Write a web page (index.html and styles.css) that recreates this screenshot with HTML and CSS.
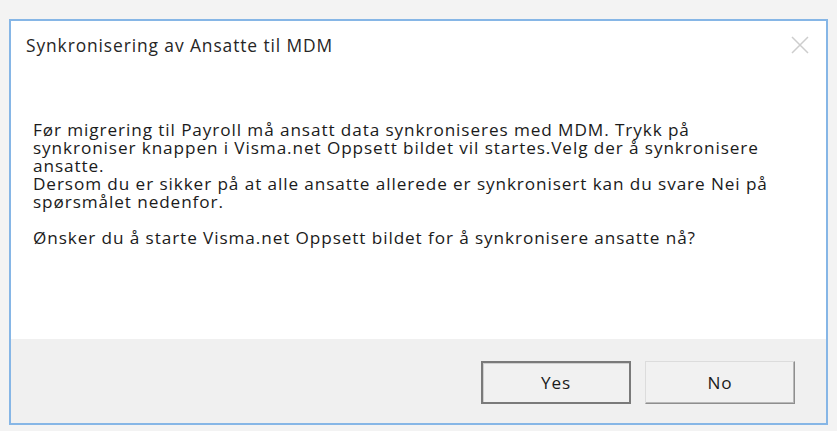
FILE: index.html
```html
<!DOCTYPE html>
<html lang="no">
<head>
<meta charset="utf-8">
<title>Synkronisering av Ansatte til MDM</title>
<link rel="stylesheet" href="styles.css">
</head>
<body>
<div class="dialog">
  <div class="titlebar">
    <span class="title">Synkronisering av Ansatte til MDM</span>
    <span class="close" aria-label="Lukk">
      <svg width="20" height="20" viewBox="0 0 20 20"><path d="M2 2 L18 18 M18 2 L2 18" stroke="#cdcdcd" stroke-width="1.5" fill="none"/></svg>
    </span>
  </div>
  <div class="content">
    <p class="msg">Før migrering til Payroll må ansatt data synkroniseres med MDM. Trykk på synkroniser knappen i Visma.net Oppsett bildet vil startes.Velg der å synkronisere ansatte.
Dersom du er sikker på at alle ansatte allerede er synkronisert kan du svare Nei på spørsmålet nedenfor.

Ønsker du å starte Visma.net Oppsett bildet for å synkronisere ansatte nå?</p>
  </div>
  <div class="footer">
    <button class="btn btn-default">Yes</button>
    <button class="btn">No</button>
  </div>
</div>
</body>
</html>
```
FILE: styles.css
```css
html, body {
  margin: 0;
  padding: 0;
}
body {
  background: #f3f3f3;
  width: 837px;
  height: 431px;
  overflow: hidden;
  font-family: "Open Sans", "Noto Sans", sans-serif;
  color: #1b1b1b;
}
.dialog {
  margin: 19px 0 0 9px;
  width: 815px;
  height: 402px;
  border: 2px solid #86b6e6;
  background: #ffffff;
  display: flex;
  flex-direction: column;
}
.titlebar {
  height: 47px;
  display: flex;
  align-items: center;
  justify-content: space-between;
  padding: 0 16px 0 15px;
}
.title {
  font-size: 17.4px;
  letter-spacing: 0.9px;
  color: #262626;
}
.close {
  display: flex;
}
.content {
  flex: 1;
  padding: 53px 40px 0 22px;
}
.msg {
  margin: 0;
  font-size: 17.2px;
  letter-spacing: 0.9px;
  line-height: 18px;
  width: 765px;
  white-space: pre-line;
}
.footer {
  height: 84px;
  background: #f0f0f0;
  display: flex;
  justify-content: flex-end;
  align-items: flex-start;
  padding: 22px 31px 0 0;
  box-sizing: border-box;
  gap: 14px;
}
.btn {
  width: 150px;
  height: 43px;
  font-family: "Open Sans", "Noto Sans", sans-serif;
  font-size: 17.2px;
  letter-spacing: 0.9px;
  color: #1b1b1b;
  background: #f1f1f1;
  border: 1px solid;
  border-color: #dcdcdc #8e8e8e #8e8e8e #dcdcdc;
  box-shadow: inset -1px -1px 0 #b8b8b8;
  padding: 0;
}
.btn-default {
  border: 2px solid #7a7a7a;
  box-shadow: inset 1px 1px 0 #cfcfcf;
}
```
